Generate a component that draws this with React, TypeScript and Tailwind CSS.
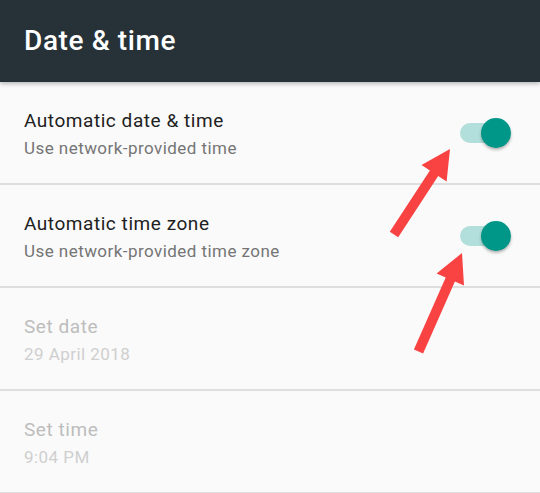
import React from 'react';

interface SettingRowProps {
  title: string;
  summary: string;
  disabled?: boolean;
  checked?: boolean;
}

function Toggle() {
  return (
    <div className="relative w-[51px] h-[30px] shrink-0">
      <div className="absolute left-0 top-[5px] w-[46px] h-[20px] rounded-full bg-[#b2dfdb]" />
      <div className="absolute right-0 top-0 w-[30px] h-[30px] rounded-full bg-[#009688] shadow-[0_2px_3px_rgba(0,0,0,0.28)]" />
    </div>
  );
}

function SettingRow({ title, summary, disabled = false, checked }: SettingRowProps) {
  return (
    <div className="h-[101px] flex items-center justify-between pl-6 pr-[29px] border-b-2 border-[#dedede] box-content">
      <div className="flex flex-col pt-[1px]">
        <span
          className={`text-[19px] leading-[24px] tracking-[0.55px] ${
            disabled ? 'text-[#bdbdbd]' : 'text-[#212121]'
          }`}
        >
          {title}
        </span>
        <span
          className={`mt-[5px] text-[17px] leading-[20px] tracking-[0.45px] ${
            disabled ? 'text-[#cfcfcf]' : 'text-[#757575]'
          }`}
        >
          {summary}
        </span>
      </div>
      {checked && <Toggle />}
    </div>
  );
}

export default function App() {
  const rows: SettingRowProps[] = [
    { title: 'Automatic date & time', summary: 'Use network-provided time', checked: true },
    { title: 'Automatic time zone', summary: 'Use network-provided time zone', checked: true },
    { title: 'Set date', summary: '29 April 2018', disabled: true },
    { title: 'Set time', summary: '9:04 PM', disabled: true },
  ];

  return (
    <div className="relative w-[540px] h-[493px] overflow-hidden bg-[#fafafa] font-['Roboto',sans-serif]">
      {/* Toolbar */}
      <div className="relative z-10 h-[82px] flex items-center px-6 bg-[#263238] shadow-[0_2px_4px_rgba(0,0,0,0.25)]">
        <h1 className="text-[28px] leading-[32px] font-medium tracking-[0.6px] text-white">Date &amp; time</h1>
      </div>

      {/* Preferences */}
      <div className="flex flex-col">
        {rows.map((row) => (
          <SettingRow key={row.title} {...row} />
        ))}
      </div>

      {/* Annotation arrows */}
      <svg
        className="absolute inset-0 z-20 pointer-events-none"
        width="540"
        height="493"
        viewBox="0 0 540 493"
      >
        <polygon
          fill="#f94242"
          points="450,149 446.6,181.5 438.2,175.9 398.2,237.2 389.8,231.8 429.9,170.45 421.5,165"
        />
        <polygon
          fill="#f94242"
          points="462,253 464,285.6 454.9,281.5 423.1,353.5 413.9,349.5 445.7,277.5 436.6,273.4"
        />
      </svg>
    </div>
  );
}
